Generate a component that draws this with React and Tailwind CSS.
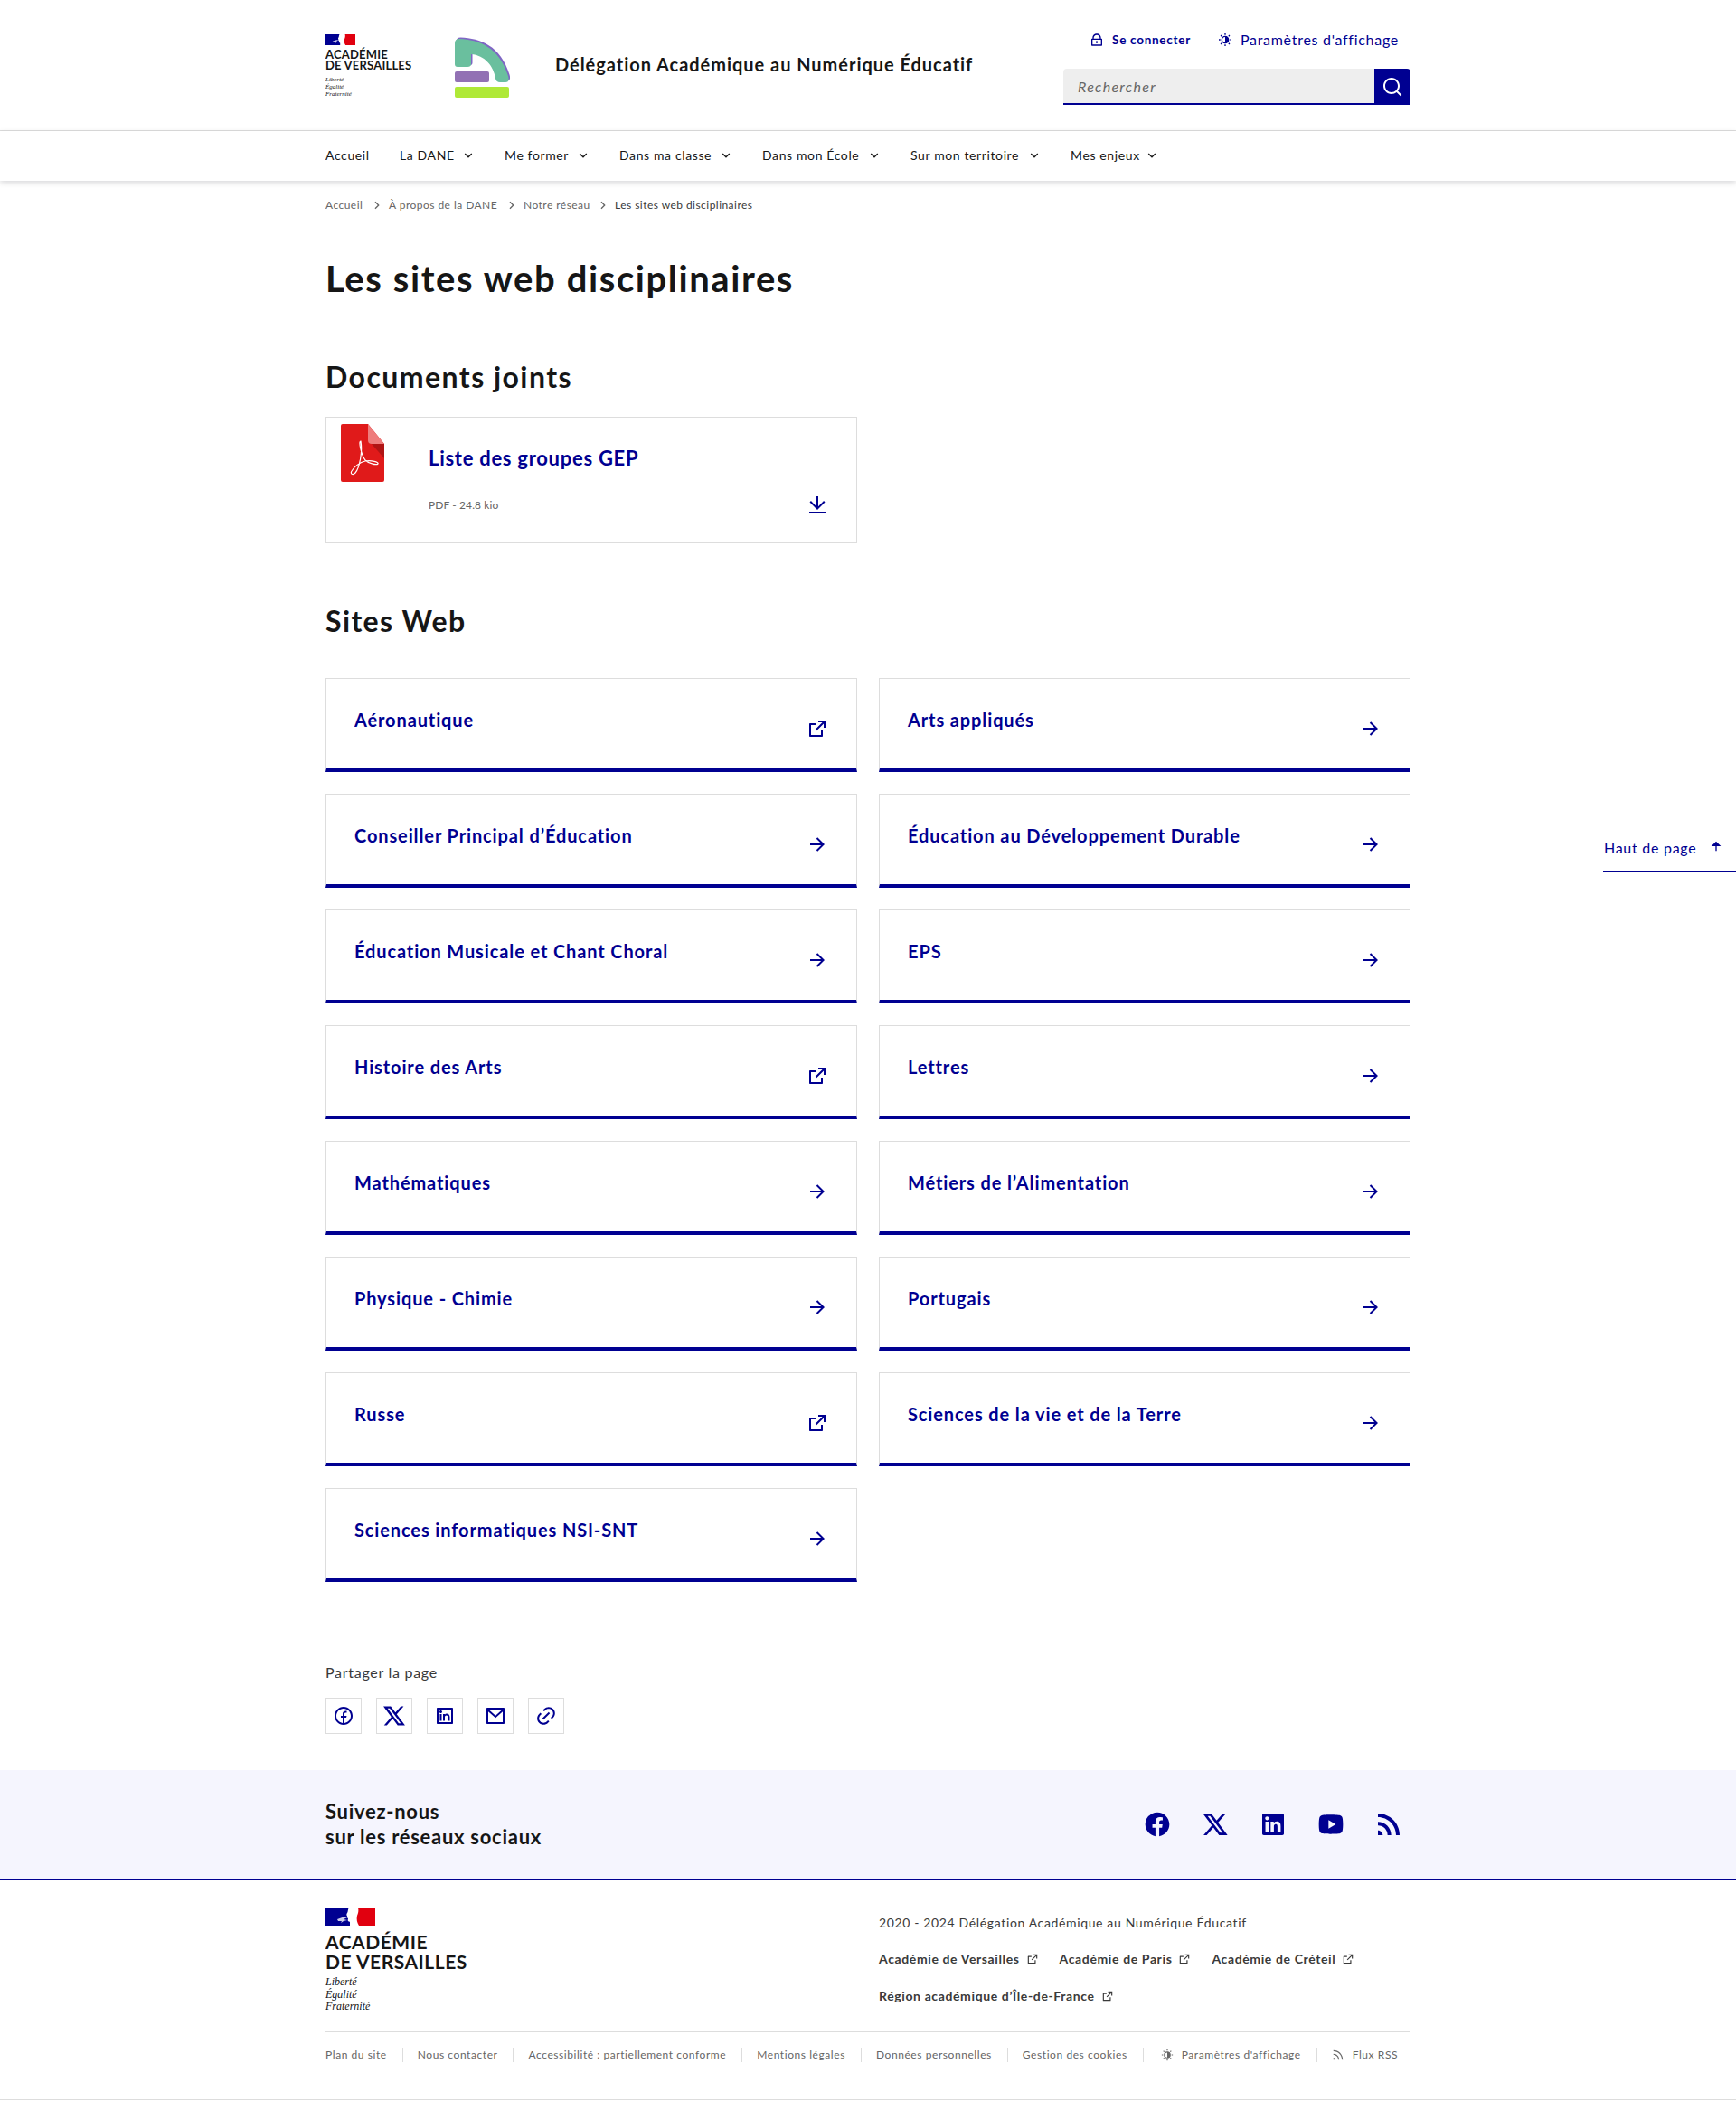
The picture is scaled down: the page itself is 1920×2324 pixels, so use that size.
import {
  RiArrowDownSLine,
  RiArrowRightLine,
  RiArrowRightSLine,
  RiArrowUpFill,
  RiDownloadLine,
  RiExternalLinkLine,
  RiFacebookCircleFill,
  RiFacebookCircleLine,
  RiLink,
  RiLinkedinBoxFill,
  RiLinkedinBoxLine,
  RiLockLine,
  RiMailLine,
  RiRssFill,
  RiRssLine,
  RiSearchLine,
  RiTwitterXLine,
  RiYoutubeFill,
} from "react-icons/ri";

const SITES = [
  ["Aéronautique", true],
  ["Arts appliqués", false],
  ["Conseiller Principal d’Éducation", false],
  ["Éducation au Développement Durable", false],
  ["Éducation Musicale et Chant Choral", false],
  ["EPS", false],
  ["Histoire des Arts", true],
  ["Lettres", false],
  ["Mathématiques", false],
  ["Métiers de l’Alimentation", false],
  ["Physique - Chimie", false],
  ["Portugais", false],
  ["Russe", true],
  ["Sciences de la vie et de la Terre", false],
  ["Sciences informatiques NSI-SNT", false],
];

const NAV = [
  ["La DANE", "w-[81px]"],
  ["Me former", "w-[92px]"],
  ["Dans ma classe", "w-[123px]"],
  ["Dans mon École", "w-[129px]"],
  ["Sur mon territoire", "w-[142px]"],
  ["Mes enjeux", "w-[95px]"],
];

function Flag({ className }) {
  return (
    <svg viewBox="0 0 55 20" preserveAspectRatio="none" className={className}>
      <rect width="55" height="20" fill="#fff" />
      <rect width="27" height="20" fill="#000091" />
      <rect x="33" width="22" height="20" fill="#e1000f" />
      <path d="M26 0H36C37 4 36 6 35 9C34 13 35 17 37 20H29C29 17 28 16 26 15.5C24 15 25 13 25 12C23 11 24 10 24 9C22.5 8.5 24 6 24.5 5C25 3 25 1 26 0Z" fill="#fff" />
      <path d="M13 13L20 10.5L24 11L20 13L24 14L20 15L17 17L18 15L14 15Z" fill="#fff" opacity="0.8" />
    </svg>
  );
}

function ThemeIcon({ className }) {
  return (
    <svg viewBox="0 0 24 24" fill="none" stroke="currentColor" className={className}>
      <circle cx="12" cy="12" r="5.5" strokeWidth="2" />
      <path d="M12 6.5a5.5 5.5 0 0 1 0 11z" fill="currentColor" stroke="none" />
      <path d="M12 1.5v2.5M12 20v2.5M1.5 12H4M20 12h2.5M4.6 4.6l1.7 1.7M17.7 17.7l1.7 1.7M4.6 19.4l1.7-1.7M17.7 6.3l1.7-1.7" strokeWidth="2" />
    </svg>
  );
}

function DaneLogo() {
  const arch = "M1 8Q1 3 6 3C28 4 50 12 60 44Q62 51 57 51H51Q47 51 46 47C44 33 34 21 19 20V31Q19 34 15 34H4Q1 34 1 31Z";
  return (
    <svg viewBox="0 0 66 70" className="h-[70px] w-[66px] shrink-0">
      <path d={arch} fill="#7f66c4" transform="translate(1.5 -1.5)" />
      <path d={arch} fill="#6abf9e" />
      <rect x="1" y="39" width="38" height="12" rx="2" fill="#9271b4" />
      <rect x="1" y="56" width="60" height="12" rx="2" fill="#afe937" />
    </svg>
  );
}

function PdfIcon() {
  return (
    <svg viewBox="0 0 48 64" className="h-16 w-12 shrink-0">
      <path d="M2 0h28l18 22v40a2 2 0 0 1-2 2H2a2 2 0 0 1-2-2V2a2 2 0 0 1 2-2z" fill="#e01a1a" />
      <path d="M30 18c0 2 2 4 4 4l14 16V22z" fill="#b01414" />
      <path d="M30 0l18 22H34a4 4 0 0 1-4-4z" fill="#ee7d7d" />
      <path
        d="M22 19c-3 0 1 16 5 21 3 3 12 6 14 4 1-2-7-4-14-3-6 1-13 7-15 11-2 3 1 5 4 2 5-6 8-24 6-35z"
        fill="none"
        stroke="#fff"
        strokeWidth="1.2"
      />
    </svg>
  );
}

function SiteCard({ title, external }) {
  const Icon = external ? RiExternalLinkLine : RiArrowRightLine;
  return (
    <a className="flex h-[104px] justify-between border border-b-4 border-[#ddd] border-b-[#000091] px-[31px] pb-8 pt-[31px] text-[#000091]">
      <span className="self-start text-[20px] font-bold leading-7 tracking-[0.88px]">{title}</span>
      <Icon className="h-6 w-6 shrink-0 self-end" />
    </a>
  );
}

function ShareButton({ children }) {
  return (
    <a className="flex h-10 w-10 items-center justify-center border border-[#ddd] text-[#000091]">{children}</a>
  );
}

function FooterLink({ children }) {
  return (
    <a className="flex items-center gap-[7px] whitespace-nowrap text-[14px] font-bold leading-6 tracking-[0.62px] text-[#3a3a3a]">
      {children}
      <RiExternalLinkLine className="h-[14px] w-[14px] font-normal" />
    </a>
  );
}

function BottomLink({ children, last }) {
  return (
    <a className={`mr-[16px] flex h-4 items-center gap-[9px] whitespace-nowrap border-[#ddd] pr-[17px] ${last ? "" : "border-r"}`}>
      {children}
    </a>
  );
}

export default function App() {
  return (
    <div className="relative h-[2324px] overflow-hidden bg-white tracking-[0.72px] text-[#161616] [font-family:Lato,sans-serif]">
      <header className="h-[145px] border-b border-[#ddd]">
        <div className="mx-auto flex h-full w-[1200px] justify-between">
          <div className="flex items-start pt-[38px]">
            <div className="w-[142px]">
              <Flag className="h-3 w-[33px]" />
              <p className="mt-[4px] text-[13px] font-bold uppercase leading-[12px] tracking-[0.015em] text-[#161616]">
                Académie
                <br />
                de Versailles
              </p>
              <p className="mt-[6px] text-[7px] italic leading-[8px] tracking-normal [font-family:'Liberation_Serif',serif]">
                Liberté
                <br />
                Égalité
                <br />
                Fraternité
              </p>
            </div>
            <div className="mt-[2px]">
              <DaneLogo />
            </div>
            <p className="ml-[46px] mt-[19px] whitespace-nowrap text-[20px] font-bold leading-7 tracking-[0.96px]">
              Délégation Académique au Numérique Éducatif
            </p>
          </div>
          <div className="flex w-[384px] flex-col items-end pt-[32px]">
            <div className="flex h-6 items-center pr-[13px] text-[#000091]">
              <a className="flex items-center gap-[9px] whitespace-nowrap text-[13.5px] font-bold">
                <RiLockLine className="h-4 w-4" />
                Se connecter
              </a>
              <a className="ml-[30px] flex items-center gap-[9px] whitespace-nowrap text-[16px]">
                <ThemeIcon className="h-4 w-4" />
                Paramètres d'affichage
              </a>
            </div>
            <div className="mt-5 flex h-10 w-full">
              <div className="flex flex-1 items-center rounded-tl border-b-2 border-[#000091] bg-[#eee] px-4 pt-[1px] text-[16px] italic tracking-[1.3px] text-[#666]">
                Rechercher
              </div>
              <div className="flex w-10 items-center justify-center rounded-tr bg-[#000091] text-white">
                <RiSearchLine className="h-6 w-6" />
              </div>
            </div>
          </div>
        </div>
      </header>

      <nav className="h-[55px] bg-white shadow-[0_2px_6px_rgba(0,0,18,0.16)]">
        <div className="mx-auto flex h-full w-[1200px] items-center gap-[35px] pb-[2px] text-[14px] tracking-[0.62px]">
          <a className="w-[47px]">Accueil</a>
          {NAV.map(([label, width]) => (
            <a key={label} className={`flex items-center justify-between whitespace-nowrap ${width}`}>
              {label}
              <RiArrowDownSLine className="-mr-[3px] h-4 w-4 shrink-0" />
            </a>
          ))}
        </div>
      </nav>

      <main className="mx-auto w-[1200px]">
        <div className="mt-[19px] flex h-4 items-center text-[12px] tracking-[0.46px] text-[#666]">
          <a className="w-[43px] whitespace-nowrap border-b border-[#666] leading-[15px]">Accueil</a>
          <RiArrowRightSLine className="mx-[5.5px] h-4 w-4 shrink-0" />
          <a className="w-[122px] whitespace-nowrap border-b border-[#666] leading-[15px]">À propos de la DANE</a>
          <RiArrowRightSLine className="mx-[5.5px] h-4 w-4 shrink-0" />
          <a className="w-[74px] whitespace-nowrap border-b border-[#666] leading-[15px]">Notre réseau</a>
          <RiArrowRightSLine className="mx-[5.5px] h-4 w-4 shrink-0" />
          <span className="text-[#3a3a3a]">Les sites web disciplinaires</span>
        </div>

        <h1 className="mt-[49px] text-[40px] font-bold leading-12 tracking-[1.6px]">Les sites web disciplinaires</h1>

        <h2 className="mt-[65px] text-[32px] font-bold leading-10 tracking-[1.45px]">Documents joints</h2>
        <div className="mt-[24px] flex h-[140px] w-[588px] border border-[#ddd] pl-4 pr-[31px] pt-[7px]">
          <PdfIcon />
          <div className="ml-[49px] flex-1">
            <p className="mt-[24px] text-[22px] font-bold leading-7 text-[#000091]">Liste des groupes GEP</p>
            <div className="mt-[26px] flex items-center justify-between">
              <span className="text-[12px] leading-5 tracking-[0.1px] text-[#666]">PDF - 24.8 kio</span>
              <RiDownloadLine className="h-6 w-6 text-[#000091]" />
            </div>
          </div>
        </div>

        <h2 className="mt-[66px] text-[32px] font-bold leading-10 tracking-[1.4px]">Sites Web</h2>
        <div className="mt-[43px] grid grid-cols-2 gap-x-6 gap-y-6">
          {SITES.map(([title, external]) => (
            <SiteCard key={title} title={title} external={external} />
          ))}
        </div>

        <p className="mt-[88px] text-[16px] leading-6 text-[#3a3a3a]">Partager la page</p>
        <div className="mt-[16px] flex gap-4">
          <ShareButton>
            <RiFacebookCircleLine className="h-6 w-6" />
          </ShareButton>
          <ShareButton>
            <RiTwitterXLine className="h-7 w-7" />
          </ShareButton>
          <ShareButton>
            <RiLinkedinBoxLine className="h-6 w-6" />
          </ShareButton>
          <ShareButton>
            <RiMailLine className="h-6 w-6" />
          </ShareButton>
          <ShareButton>
            <RiLink className="h-6 w-6" />
          </ShareButton>
        </div>
      </main>

      <section className="mt-10 h-[122px] border-b-2 border-[#000091] bg-[#f5f5fe]">
        <div className="mx-auto flex h-full w-[1200px] items-center justify-between">
          <p className="text-[22px] font-bold leading-7">
            Suivez-nous
            <br />
            sur les réseaux sociaux
          </p>
          <div className="flex gap-4 text-[#000091]">
            <a className="flex h-12 w-12 items-center justify-center"><RiFacebookCircleFill className="h-8 w-8" /></a>
            <a className="flex h-12 w-12 items-center justify-center"><RiTwitterXLine className="h-8 w-8" /></a>
            <a className="flex h-12 w-12 items-center justify-center"><RiLinkedinBoxFill className="h-8 w-8" /></a>
            <a className="flex h-12 w-12 items-center justify-center"><RiYoutubeFill className="h-8 w-8" /></a>
            <a className="flex h-12 w-12 items-center justify-center"><RiRssFill className="h-8 w-8" /></a>
          </div>
        </div>
      </section>

      <footer className="border-b border-[#ddd]">
        <div className="mx-auto w-[1200px]">
          <div className="flex h-[168px] border-b border-[#ddd]">
            <div className="w-[612px] pt-[30px]">
              <Flag className="h-5 w-[55px]" />
              <p className="mt-[7px] text-[21px] font-bold uppercase leading-[22px] tracking-[0.025em]">
                Académie
                <br />
                de Versailles
              </p>
              <p className="mt-[5px] text-[12px] italic leading-[13.5px] tracking-normal [font-family:'Liberation_Serif',serif]">
                Liberté
                <br />
                Égalité
                <br />
                Fraternité
              </p>
            </div>
            <div className="pt-[35px]">
              <p className="text-[14px] leading-6 tracking-[0.64px] text-[#3a3a3a]">2020 - 2024 Délégation Académique au Numérique Éducatif</p>
              <div className="mt-[16px] flex gap-[23px]">
                <FooterLink>Académie de Versailles</FooterLink>
                <FooterLink>Académie de Paris</FooterLink>
                <FooterLink>Académie de Créteil</FooterLink>
              </div>
              <div className="mt-[17px] flex">
                <FooterLink>Région académique d’Île-de-France</FooterLink>
              </div>
            </div>
          </div>
          <div className="flex h-[74px] items-start pt-[17px] text-[12px] tracking-[0.57px] text-[#666]">
            <BottomLink>Plan du site</BottomLink>
            <BottomLink>Nous contacter</BottomLink>
            <BottomLink>Accessibilité : partiellement conforme</BottomLink>
            <BottomLink>Mentions légales</BottomLink>
            <BottomLink>Données personnelles</BottomLink>
            <BottomLink>Gestion des cookies</BottomLink>
            <BottomLink>
              <ThemeIcon className="ml-[3px] h-[14px] w-[14px]" />
              Paramètres d'affichage
            </BottomLink>
            <BottomLink last>
              <RiRssLine className="h-[14px] w-[14px]" />
              Flux RSS
            </BottomLink>
          </div>
        </div>
      </footer>

      <a className="absolute left-[1773px] top-[922px] flex h-[43px] w-[147px] items-start border-b border-[#000091] pl-[1px] pt-[4px] text-[16px] leading-6 text-[#000091]">
        Haut de page
        <RiArrowUpFill className="absolute left-[117px] top-[6px] h-4 w-4" />
      </a>
    </div>
  );
}
